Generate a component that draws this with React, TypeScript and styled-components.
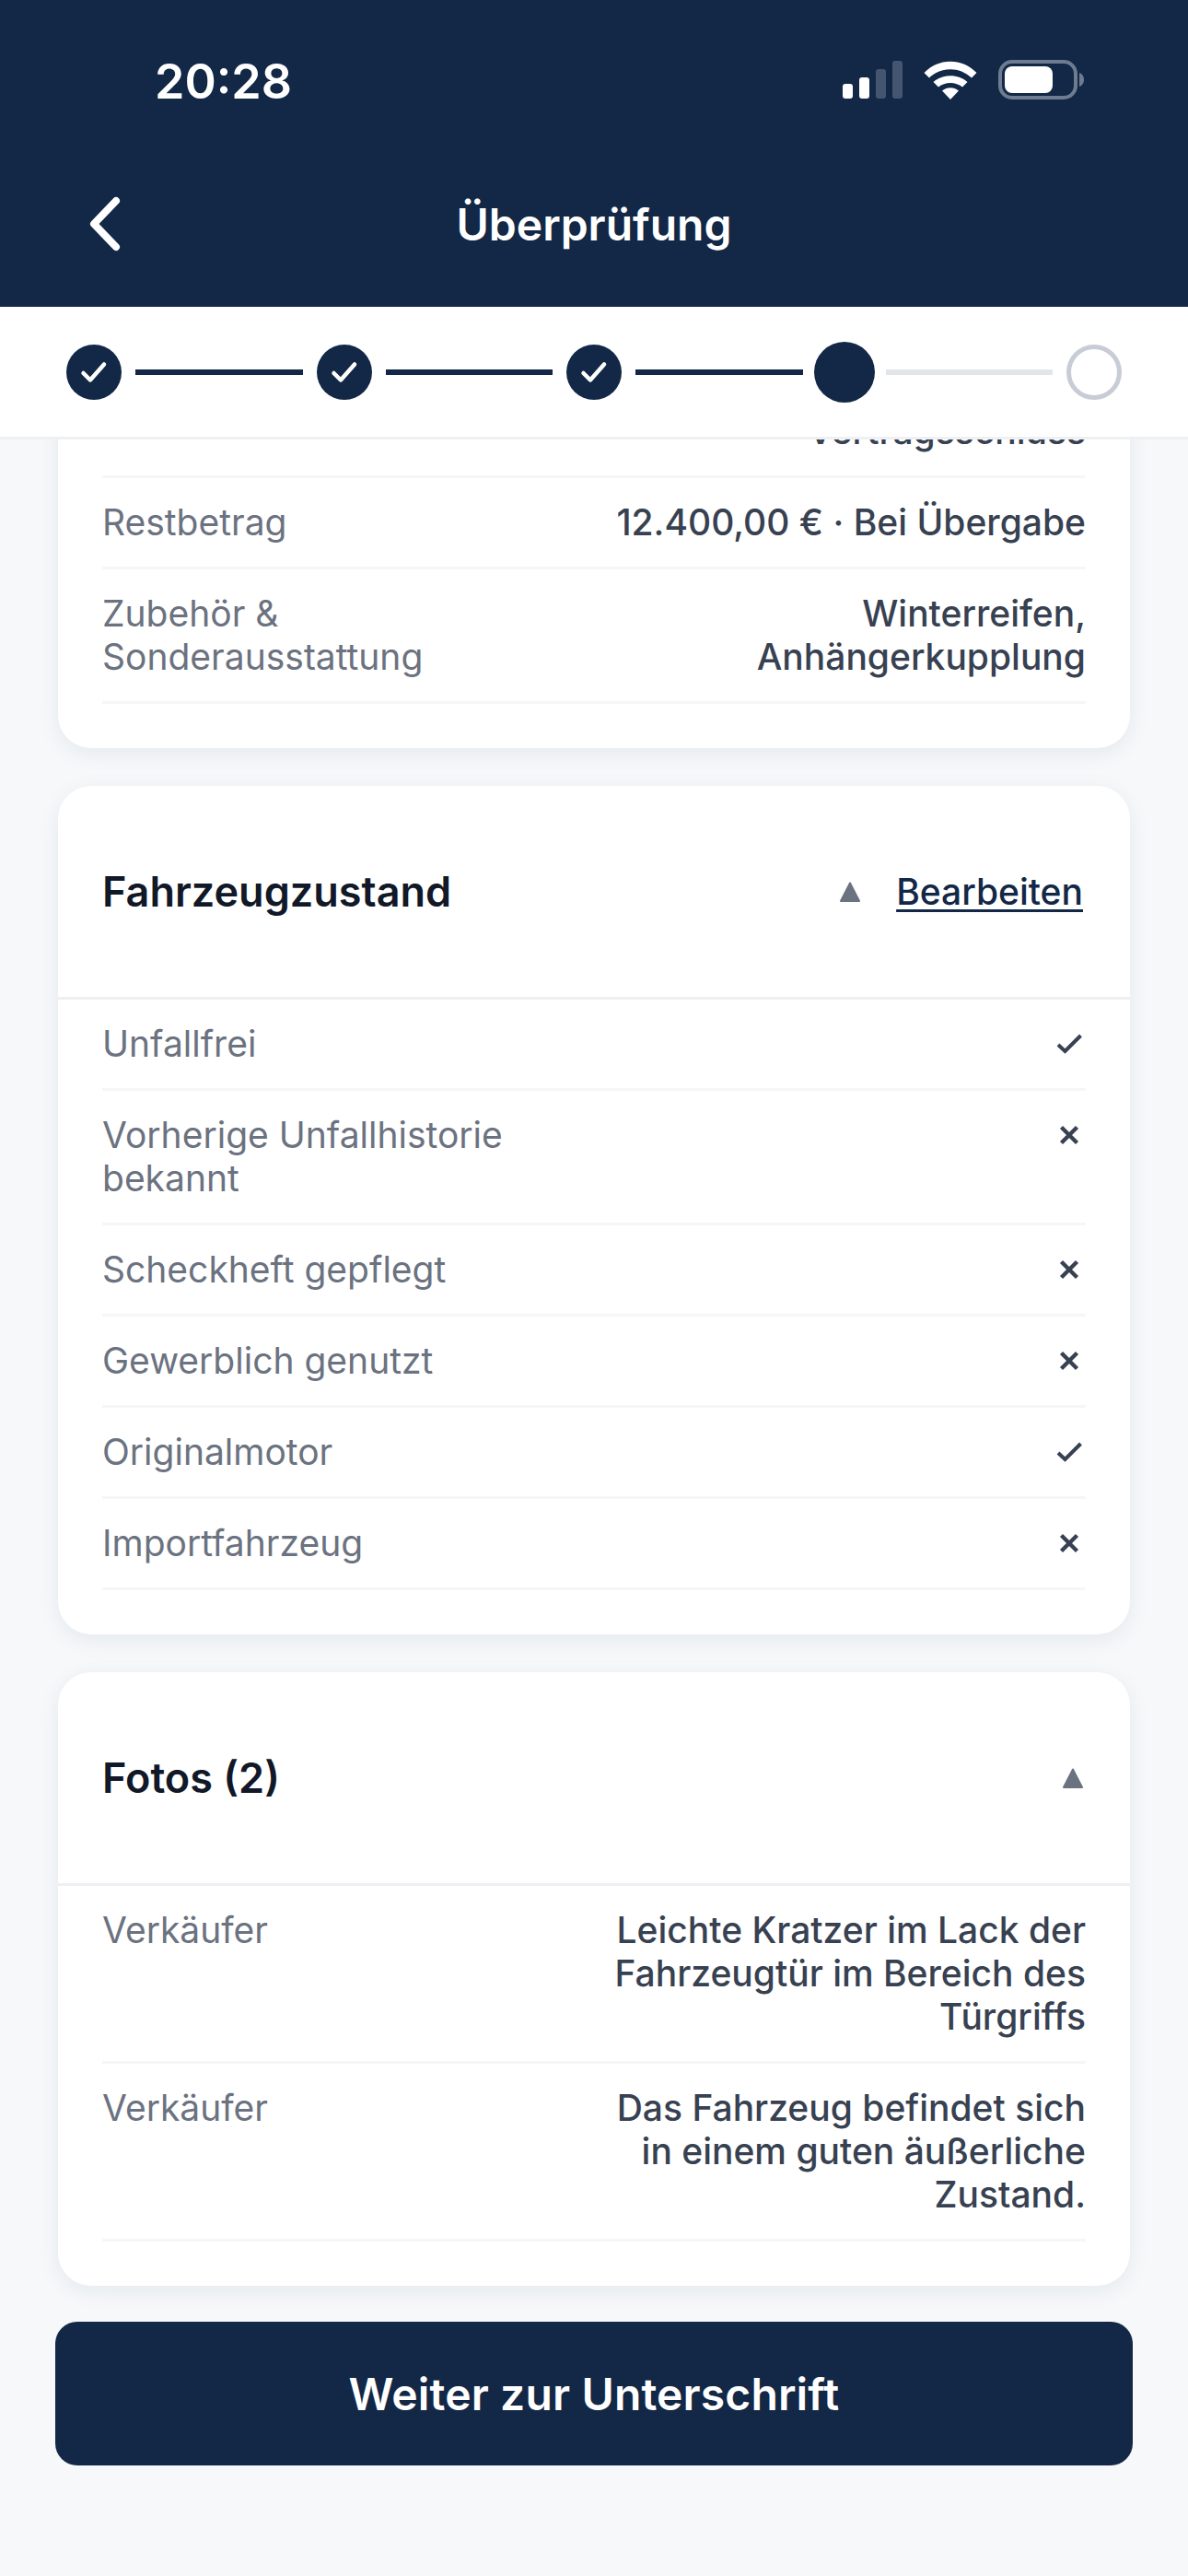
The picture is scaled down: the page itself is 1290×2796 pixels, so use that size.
import React from 'react';
import styled, { createGlobalStyle } from 'styled-components';

const GlobalStyle = createGlobalStyle`
  html, body {
    margin: 0;
    padding: 0;
    background: #f6f8fa;
  }
  * {
    box-sizing: border-box;
  }
`;

const NAVY = '#122846';

const Screen = styled.div`
  width: 1290px;
  height: 2796px;
  display: flex;
  flex-direction: column;
  overflow: hidden;
  background: #f6f8fa;
  font-family: Inter, 'Liberation Sans', sans-serif;
`;

const Header = styled.header`
  height: 333px;
  flex: none;
  background: ${NAVY};
  color: #fff;
  display: flex;
  flex-direction: column;
`;

const StatusBar = styled.div`
  height: 177px;
  padding: 60px 113px 0 168px;
  display: flex;
  justify-content: space-between;
  align-items: flex-start;
`;

const Clock = styled.span`
  font-size: 52px;
  line-height: 58px;
  font-weight: 600;
`;

const StatusIcons = styled.div`
  display: flex;
  align-items: center;
  gap: 23px;
  padding-top: 5px;
`;

const NavBar = styled.div`
  flex: 1;
  position: relative;
  display: flex;
  align-items: center;
  justify-content: center;
  padding-bottom: 22px;
`;

const BackButton = styled.svg`
  position: absolute;
  left: 93px;
  top: 36px;
`;

const Title = styled.h1`
  margin: 0;
  font-size: 48px;
  line-height: 60px;
  font-weight: 600;
`;

const Stepper = styled.div`
  height: 144px;
  flex: none;
  background: #fff;
  border-bottom: 3px solid #eff0f4;
  padding: 0 72px;
  display: flex;
  align-items: center;
`;

const StepDot = styled.div<{ $state: 'done' | 'active' | 'todo' }>`
  width: 60px;
  height: 60px;
  flex: none;
  border-radius: 50%;
  display: flex;
  align-items: center;
  justify-content: center;
  background: ${(p) => (p.$state === 'todo' ? '#fff' : NAVY)};
  border: ${(p) => (p.$state === 'todo' ? '5px solid #c8ccd6' : 'none')};
  transform: ${(p) => (p.$state === 'active' ? 'scale(1.1)' : 'none')};
`;

const StepLine = styled.div<{ $done: boolean }>`
  flex: 1;
  height: 6px;
  margin: 0 15px;
  background: ${(p) => (p.$done ? NAVY : '#e2e5ea')};
`;

const Scroller = styled.main`
  height: 2043px;
  flex: none;
  overflow: hidden;
  display: flex;
  flex-direction: column;
  justify-content: flex-end;
  gap: 41px;
  padding: 0 63px 39px;
`;

const Card = styled.section`
  flex: none;
  background: #fff;
  border-radius: 36px;
  box-shadow: 0 6px 24px rgba(18, 40, 70, 0.07);
  padding-bottom: 48px;
`;

const CardBody = styled.div`
  padding: 0 48px;
`;

const CardHeader = styled.div`
  height: 232px;
  padding: 0 51px 0 48px;
  display: flex;
  align-items: center;
  border-bottom: 3px solid #eff0f4;
`;

const CardTitle = styled.h2`
  flex: 1;
  margin: 0;
  font-size: 45px;
  line-height: 60px;
  font-weight: 600;
  color: #111827;
`;

const EditLink = styled.a`
  margin-left: 39px;
  font-size: 39px;
  line-height: 47px;
  font-weight: 500;
  color: ${NAVY};
  text-decoration: underline;
  text-decoration-thickness: 3px;
  text-underline-offset: 5px;
`;

const Row = styled.div`
  display: flex;
  justify-content: space-between;
  align-items: flex-start;
  padding: 24px 0 25px;
  border-bottom: 3px solid #f5f6f8;
`;

const Label = styled.div`
  width: 50%;
  font-size: 39px;
  line-height: 47px;
  color: #6b7280;
`;

const Value = styled.div`
  width: 50%;
  text-align: right;
  font-size: 39px;
  line-height: 47px;
  font-weight: 500;
  color: #374151;
`;

const MarkBox = styled.div`
  height: 47px;
  display: flex;
  align-items: center;
`;

const Footer = styled.div`
  padding: 0 60px;
`;

const SubmitButton = styled.button`
  width: 100%;
  height: 156px;
  border: 0;
  border-radius: 24px;
  background: ${NAVY};
  color: #fff;
  font-family: inherit;
  font-size: 48px;
  font-weight: 600;
  letter-spacing: 0.15px;
`;

const StepCheck = () => (
  <svg width="30" height="30" viewBox="0 0 30 30" fill="none" stroke="#fff" strokeWidth="4.5" strokeLinecap="round" strokeLinejoin="round">
    <path d="M3.5 16 L11 23.5 L26 6.5" />
  </svg>
);

const Caret = () => (
  <svg width="22" height="22" viewBox="0 0 22 22" fill="#6b7280">
    <path d="M11 1.5 L21 21 H1 Z" stroke="#6b7280" strokeWidth="2" strokeLinejoin="round" />
  </svg>
);

const YesMark = () => (
  <svg width="36" height="36" viewBox="0 0 36 36" fill="none" stroke="#374151" strokeWidth="4">
    <path d="M6 19 L13.5 26 L30.5 9" />
  </svg>
);

const NoMark = () => (
  <svg width="36" height="36" viewBox="0 0 36 36" fill="none" stroke="#374151" strokeWidth="4.4">
    <path d="M9.5 9.5 L26.5 26.5 M26.5 9.5 L9.5 26.5" />
  </svg>
);

const conditionRows: [React.ReactNode, boolean][] = [
  ['Unfallfrei', true],
  ['Vorherige Unfallhistorie bekannt', false],
  ['Scheckheft gepflegt', false],
  ['Gewerblich genutzt', false],
  ['Originalmotor', true],
  ['Importfahrzeug', false],
];

export default function App() {
  return (
    <Screen>
      <GlobalStyle />
      <Header>
        <StatusBar>
          <Clock>20:28</Clock>
          <StatusIcons>
            <svg width="65" height="41" viewBox="0 0 65 41" fill="#fff">
              <rect x="0" y="25" width="11" height="16" rx="3" />
              <rect x="18" y="18" width="11" height="23" rx="3" />
              <rect x="36" y="9" width="11" height="32" rx="3" fill="#44566f" />
              <rect x="54" y="0" width="11" height="41" rx="3" fill="#44566f" />
            </svg>
            <svg width="58" height="42" viewBox="0 0 58 42" fill="#fff">
              <path d="M0.5 13 C16 -3.5 42 -3.5 57.5 13 L52 18.5 C39 6 19 6 6 18.5 Z" />
              <path d="M10.5 23 C20 14 38 14 47.5 23 L42 28.5 C35 22.5 23 22.5 16 28.5 Z" />
              <path d="M20 32.5 C25 28 33 28 38 32.5 L29 42 Z" />
            </svg>
            <svg width="93" height="43" viewBox="0 0 93 43" fill="none">
              <rect x="2" y="2" width="82" height="39" rx="13" stroke="#6d7c90" strokeWidth="4" />
              <rect x="7" y="7" width="52" height="29" rx="8" fill="#fff" />
              <path d="M88 14 C91 15 93 18 93 21.5 C93 25 91 28 88 29 Z" fill="#6d7c90" />
            </svg>
          </StatusIcons>
        </StatusBar>
        <NavBar>
          <BackButton width="40" height="60" viewBox="0 0 40 60" fill="none" stroke="#fff" strokeWidth="8" strokeLinecap="round" strokeLinejoin="round">
            <path d="M33 5 L9 30 L33 55" />
          </BackButton>
          <Title>Überprüfung</Title>
        </NavBar>
      </Header>
      <Stepper>
        <StepDot $state="done"><StepCheck /></StepDot>
        <StepLine $done />
        <StepDot $state="done"><StepCheck /></StepDot>
        <StepLine $done />
        <StepDot $state="done"><StepCheck /></StepDot>
        <StepLine $done />
        <StepDot $state="active" />
        <StepLine $done={false} />
        <StepDot $state="todo" />
      </Stepper>
      <Scroller>
        <Card>
          <CardBody>
            <Row>
              <Label>Anzahlung</Label>
              <Value>3.000,00 € · Bei Vertragsschluss</Value>
            </Row>
            <Row>
              <Label>Restbetrag</Label>
              <Value>12.400,00 € · Bei Übergabe</Value>
            </Row>
            <Row>
              <Label>Zubehör &amp; Sonderausstattung</Label>
              <Value>Winterreifen, Anhängerkupplung</Value>
            </Row>
          </CardBody>
        </Card>
        <Card>
          <CardHeader>
            <CardTitle>Fahrzeugzustand</CardTitle>
            <Caret />
            <EditLink>Bearbeiten</EditLink>
          </CardHeader>
          <CardBody>
            {conditionRows.map(([label, ok], i) => (
              <Row key={i}>
                <Label>{label}</Label>
                <MarkBox>{ok ? <YesMark /> : <NoMark />}</MarkBox>
              </Row>
            ))}
          </CardBody>
        </Card>
        <Card>
          <CardHeader>
            <CardTitle>Fotos (2)</CardTitle>
            <Caret />
          </CardHeader>
          <CardBody>
            <Row>
              <Label>Verkäufer</Label>
              <Value>Leichte Kratzer im Lack der Fahrzeugtür im Bereich des Türgriffs</Value>
            </Row>
            <Row>
              <Label>Verkäufer</Label>
              <Value>Das Fahrzeug befindet sich in einem guten äußerliche Zustand.</Value>
            </Row>
          </CardBody>
        </Card>
      </Scroller>
      <Footer>
        <SubmitButton>Weiter zur Unterschrift</SubmitButton>
      </Footer>
    </Screen>
  );
}
